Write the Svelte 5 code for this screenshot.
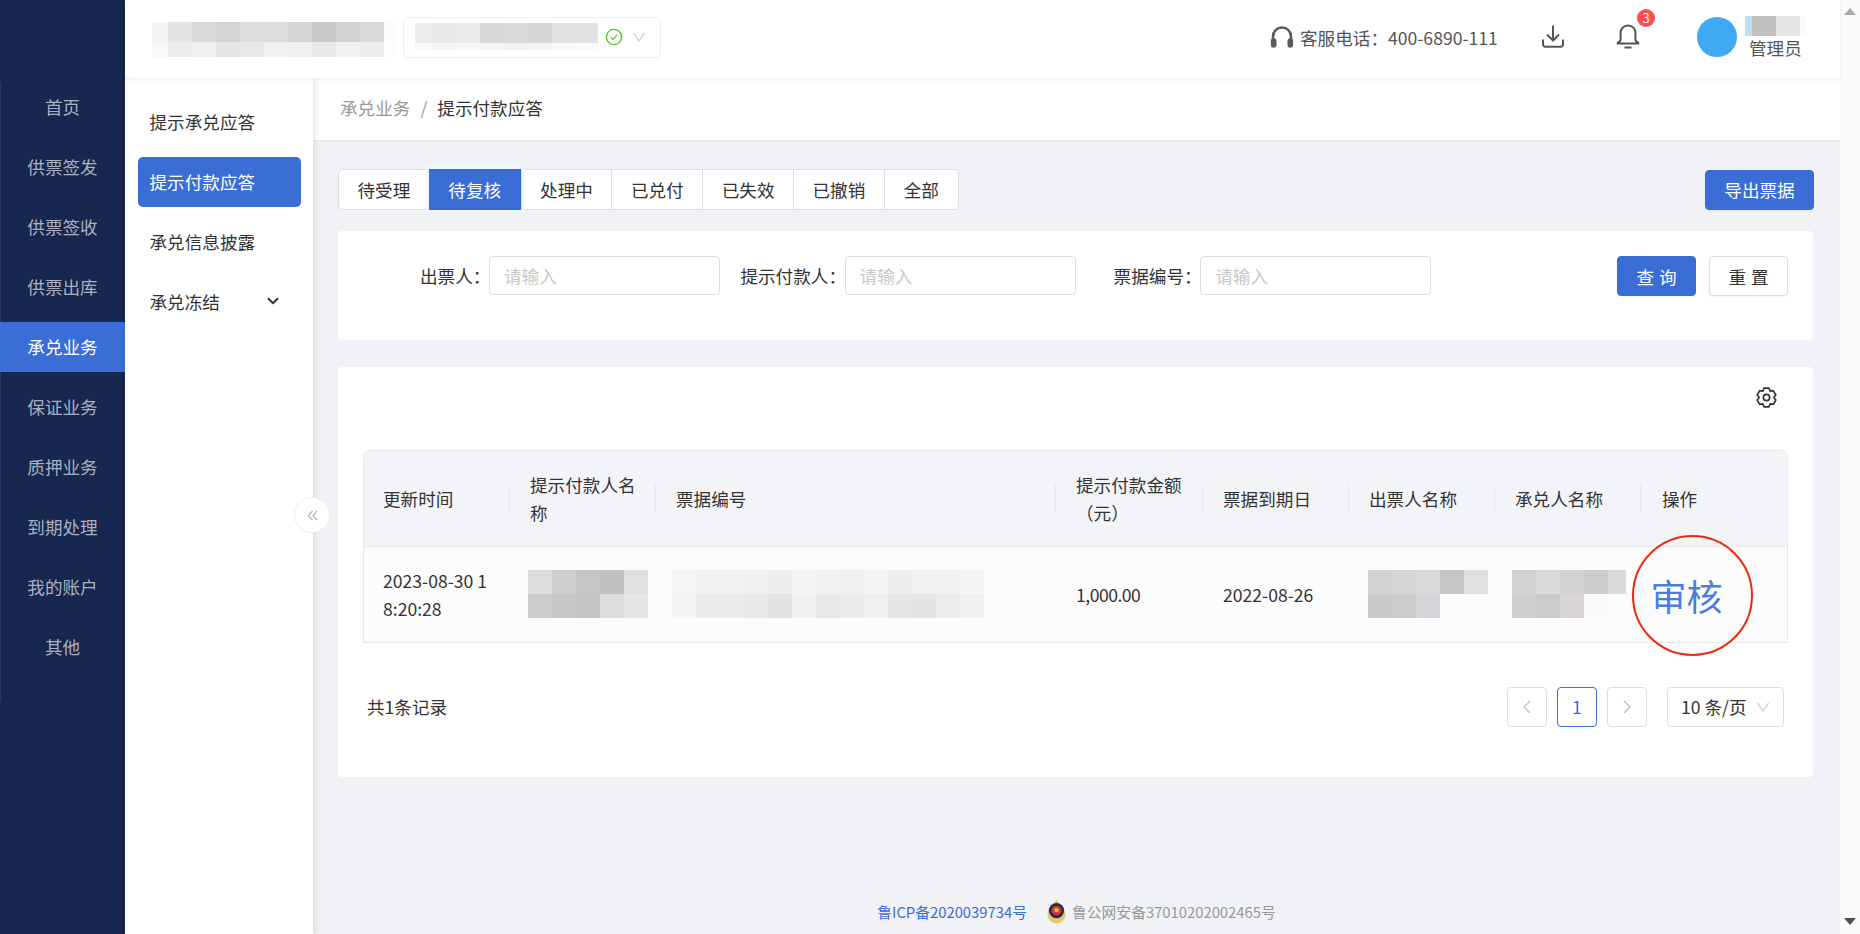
<script>
  const navItems = ['首页', '供票签发', '供票签收', '供票出库', '承兑业务', '保证业务', '质押业务', '到期处理', '我的账户', '其他'];
  const subItems = ['提示承兑应答', '提示付款应答', '承兑信息披露'];
  const tabs = ['待受理', '待复核', '处理中', '已兑付', '已失效', '已撤销', '全部'];
  const filters = [
    { label: '出票人' },
    { label: '提示付款人' },
    { label: '票据编号' }
  ];
  const columns = [
    { title: '更新时间', width: 146 },
    { title: '提示付款人名称', width: 146 },
    { title: '票据编号', width: 400 },
    { title: '提示付款金额（元）', width: 147 },
    { title: '票据到期日', width: 146 },
    { title: '出票人名称', width: 146 },
    { title: '承兑人名称', width: 146 },
    { title: '操作', width: 148 }
  ];

  // masked names, kept as colour tiles per row
  const brandMask = {
    cols: [16, 24, 24, 24, 24, 24, 24, 24, 24, 24, 13],
    heights: [20, 15],
    rows: [
      ['#f5f5f5', '#e4e4e4', '#d9d9d9', '#d5d5d5', '#dcdcdc', '#dcdcdc', '#d6d6d6', '#c9c9c9', '#d2d2d2', '#d9d9d9', '#fbfbfb'],
      ['#f8f8f8', '#ececec', '#efefef', '#e5e5e5', '#e9e9e9', '#f1f1f1', '#efefef', '#e9e9e9', '#f1f1f1', '#ececec', '#fdfdfd']
    ]
  };
  const orgMask = {
    cols: [17, 24, 24, 24, 24, 24, 24, 22],
    heights: [20, 7],
    rows: [
      ['#ececec', '#e8e8e8', '#ebebeb', '#d8d8d8', '#dadada', '#d6d6d6', '#e2e2e2', '#e2e2e2'],
      ['#f8f8f8', '#f3f3f3', '#f7f7f7', '#f4f4f4', '#f1f1f1', '#f4f4f4', '#f7f7f7', '#fafafa']
    ]
  };
  const userMask = {
    cols: [7, 24, 24, 6],
    heights: [20],
    rows: [['#bfdff3', '#c1c1c1', '#e5e6e6', '#fbfbfb']]
  };
  const payerMask = {
    pad: 18,
    cols: [24, 24, 24, 24, 24],
    heights: [24, 24],
    rows: [
      ['#dcdcdc', '#cfcfcf', '#c6c6c6', '#c1c1c1', '#e0e0e2'],
      ['#cecdcb', '#c6c8c8', '#c4c4c6', '#dcdcda', '#e6e7e9']
    ]
  };
  const billMask = {
    pad: 16,
    cols: [24, 24, 24, 24, 24, 24, 24, 24, 24, 24, 24, 24, 24],
    heights: [24, 24],
    rows: [
      ['#f6f6f4', '#f1f1f1', '#f1f1f1', '#f0f0f0', '#eeeeee', '#f4f4f4', '#f1f1f1', '#efefef', '#f4f4f4', '#eeeeee', '#f1f1f1', '#f1f1f1', '#f4f6f4'],
      ['#f5f5f5', '#ebebeb', '#ebebeb', '#e9e9e9', '#e2e2e2', '#f0f0f0', '#e8e8e8', '#eaeceb', '#efefef', '#e7e7e7', '#e4e4e4', '#ececea', '#f0f0f2']
    ]
  };
  const drawerMask = {
    pad: 19,
    cols: [24, 24, 24, 24, 24],
    heights: [24, 24],
    rows: [
      ['#d2d4d2', '#d5d5d5', '#d9d9d9', '#c8c6c4', '#dfe0e2'],
      ['#cbc9c9', '#cccccc', '#d3d5d8', '#fcfcfc', '#fcfcfc']
    ]
  };
  const acceptorMask = {
    pad: 17,
    cols: [24, 24, 24, 24, 18],
    heights: [24, 24],
    rows: [
      ['#d2d2d2', '#d9d9d9', '#d3d3d3', '#cccccc', '#d9d9db'],
      ['#cfcfcf', '#cbcbcb', '#d8d5d4', '#f9fafc', '#fcfcfc']
    ]
  };

  const trackStyle = (m) =>
    `grid-template-columns:${m.cols.map((c) => c + 'px').join(' ')};grid-template-rows:${m.heights.map((h) => h + 'px').join(' ')}`;

  // six toothed cog outline
  function cogPath(outer, inner) {
    const pts = [];
    for (let i = 0; i < 6; i++) {
      const a = i * 60 - 90;
      for (const [off, r] of [[-27, inner], [-15, outer], [15, outer], [27, inner]]) {
        const rad = ((a + off) * Math.PI) / 180;
        pts.push(`${(12 + r * Math.cos(rad)).toFixed(2)} ${(12 + r * Math.sin(rad)).toFixed(2)}`);
      }
    }
    return 'M' + pts.join('L') + 'Z';
  }
</script>

{#snippet mosaic(m)}
  <div class="mosaic" style={trackStyle(m)}>
    {#each m.rows as row}
      {#each row as color}
        <i style="background:{color}"></i>
      {/each}
    {/each}
  </div>
{/snippet}

{#snippet maskedCell(m, width)}
  <div class="cell masked" style="width:{width}px;padding-left:{m.pad}px">{@render mosaic(m)}</div>
{/snippet}

<div class="page">
  <aside class="nav">
    <div class="nav-list">
      {#each navItems as item}
        <div class="nav-item" class:active={item === '承兑业务'}>{item}</div>
      {/each}
    </div>
  </aside>

  <div class="body">
    <header class="topbar">
      <div class="brand">{@render mosaic(brandMask)}</div>
      <div class="org-select">
        {@render mosaic(orgMask)}
        <svg class="ok-icon" viewBox="0 0 18 18" width="18" height="18" fill="none" stroke="#52c41a">
          <circle cx="9" cy="9" r="7.6" stroke-width="1.4" />
          <path d="M5.8 9.2l2.3 2.5 4-4.8" stroke-width="1.2" />
        </svg>
        <svg class="caret" viewBox="0 0 14 14" width="14" height="14" fill="none" stroke="#c9c9c9" stroke-width="1.2">
          <path d="M1.500 3l5.500 8 5.500-8" />
        </svg>
      </div>

      <div class="top-right">
        <div class="service">
          <svg viewBox="0 0 24 22" width="24" height="22" fill="none" stroke="#5a5a5a" stroke-width="2.600">
            <path d="M3 15V10.500a9 9 0 0 1 18 0V15" />
            <rect x="2.200" y="13.500" width="3" height="7" rx="1.500" fill="#5a5a5a" />
            <rect x="18.800" y="13.500" width="3" height="7" rx="1.500" fill="#5a5a5a" />
          </svg>
          <span>客服电话：400-6890-111</span>
        </div>
        <svg class="download" viewBox="0 0 24 24" width="24" height="24" fill="none" stroke="#555" stroke-width="2">
          <path d="M12 1.500v14.500M6 10.500l6 6 6-6" />
          <path d="M2 15.500v5a2.200 2.200 0 0 0 2.200 2.200h15.600a2.200 2.200 0 0 0 2.200-2.200v-5" />
        </svg>
        <div class="bell">
          <svg viewBox="0 0 24 25" width="24" height="25" fill="none" stroke="#555" stroke-width="2">
            <path d="M12 1.500c-4.700 0-7.400 3.400-7.400 7.600v6.200c0 1.500-1 2.800-2.800 3.500v.7h20.400v-.7c-1.800-.7-2.800-2-2.800-3.500V9.100c0-4.200-2.700-7.600-7.400-7.600z" />
            <path d="M8.500 23.500h7" />
          </svg>
          <span class="badge">3</span>
        </div>
        <div class="user">
          <span class="avatar"></span>
          <div class="user-text">
            {@render mosaic(userMask)}
            <span>管理员</span>
          </div>
        </div>
      </div>
    </header>

    <div class="below">
      <aside class="subnav">
        {#each subItems as item}
          <div class="sub-item" class:active={item === '提示付款应答'}>{item}</div>
        {/each}
        <div class="sub-item">
          承兑冻结
          <svg viewBox="0 0 12 8" width="12" height="8" fill="none" stroke="#333" stroke-width="2">
            <path d="M1 1.200l5 5 5-5" />
          </svg>
        </div>
        <button class="collapse" aria-label="收起">
          <svg viewBox="0 0 12 12" width="11" height="11" fill="none" stroke="#aaa" stroke-width="1.200">
            <path d="M6 1L1.500 6 6 11M11 1L6.500 6l4.500 5" />
          </svg>
        </button>
      </aside>

      <main class="content">
        <div class="crumbs">
          <span class="crumb-parent">承兑业务</span>
          <span class="crumb-sep">/</span>
          <span class="crumb-current">提示付款应答</span>
        </div>

        <div class="work">
          <div class="toolbar">
            <div class="tabs">
              {#each tabs as tab}
                <div class="tab" class:active={tab === '待复核'}>{tab}</div>
              {/each}
            </div>
            <button class="btn primary export">导出票据</button>
          </div>

          <section class="card filters">
            <div class="filter-fields">
              {#each filters as f}
                <div class="field">
                  <span class="field-label">{f.label}：</span>
                  <div class="input">请输入</div>
                </div>
              {/each}
            </div>
            <div class="filter-actions">
              <button class="btn primary wide">查询</button>
              <button class="btn wide">重置</button>
            </div>
          </section>

          <section class="card results">
            <div class="settings">
              <svg viewBox="0 0 24 24" width="21" height="21" fill="none" stroke="#333" stroke-width="1.900" stroke-linejoin="round">
                <path d={cogPath(11, 8.6)} />
                <circle cx="12" cy="12" r="3.600" />
              </svg>
            </div>

            <div class="table">
              <div class="row head">
                {#each columns as col}
                  <div class="cell" style="width:{col.width}px">
                    <span>{col.title}</span>
                  </div>
                {/each}
              </div>
              <div class="row data">
                <div class="cell" style="width:{columns[0].width}px"><span class="date">2023-08-30 18:20:28</span></div>
                {@render maskedCell(payerMask, columns[1].width)}
                {@render maskedCell(billMask, columns[2].width)}
                <div class="cell amount" style="width:{columns[3].width}px">1,000.00</div>
                <div class="cell" style="width:{columns[4].width}px">2022-08-26</div>
                {@render maskedCell(drawerMask, columns[5].width)}
                {@render maskedCell(acceptorMask, columns[6].width)}
                <div class="cell" style="width:{columns[7].width}px"></div>
              </div>
              <div class="review-mark"><a href="#review">审核</a></div>
            </div>

            <div class="pager-row">
              <span>共1条记录</span>
              <div class="pager">
                <button class="page-btn" aria-label="上一页">
                  <svg viewBox="0 0 10 16" width="10" height="16" fill="none" stroke="#bbb" stroke-width="1.200"><path d="M8 2L2 8l6 6" /></svg>
                </button>
                <button class="page-btn current">1</button>
                <button class="page-btn" aria-label="下一页">
                  <svg viewBox="0 0 10 16" width="10" height="16" fill="none" stroke="#bbb" stroke-width="1.200"><path d="M2 2l6 6-6 6" /></svg>
                </button>
                <div class="page-size">
                  10 条/页
                  <svg viewBox="0 0 14 14" width="14" height="14" fill="none" stroke="#c4c4c4" stroke-width="1.200"><path d="M1.500 3l5.500 8 5.500-8" /></svg>
                </div>
              </div>
            </div>
          </section>

          <footer class="footer">
            <span class="icp">鲁ICP备2020039734号</span>
            <svg class="emblem" viewBox="0 0 20 25" width="19" height="24">
              <circle cx="10" cy="15" r="9.500" fill="#e6c765" />
              <path d="M7.500 3l2.500-2.500L12.500 3z" fill="#e0b93f" />
              <circle cx="10" cy="11" r="8" fill="#1d2a66" />
              <circle cx="10" cy="11" r="5.200" fill="#cf3a2c" />
              <circle cx="10" cy="10.500" r="2.300" fill="#e8b93a" />
            </svg>
            <span class="psb">鲁公网安备37010202002465号</span>
          </footer>
        </div>
      </main>
    </div>
  </div>

  <div class="scrollbar">
    <i class="arrow up"></i>
    <i class="arrow down"></i>
  </div>
</div>

<style>
  :global(body) {
    margin: 0;
    background: #f0f2f6;
  }

  .page {
    display: flex;
    height: 934px;
    overflow: hidden;
    font-family: "Noto Sans CJK SC", "Liberation Sans", sans-serif;
    font-size: 17.6px;
    color: #333;
  }

  .mosaic {
    display: grid;
  }

  .mosaic i {
    display: block;
  }

  /* left rail */
  .nav {
    flex: none;
    width: 125px;
    padding-top: 82px;
    box-sizing: border-box;
    background: #18274f;
  }

  .nav-list {
    border-left: 1px solid #2c3a60;
    height: 620px;
  }

  .nav-item {
    height: 50px;
    box-sizing: border-box;
    padding-bottom: 2px;
    margin: 0 0 10px -1px;
    display: flex;
    align-items: center;
    justify-content: center;
    color: #a9b0bf;
  }

  .nav-item.active {
    background: #3b6dd6;
    color: #fff;
  }

  .body {
    flex: 1;
    min-width: 0;
    display: flex;
    flex-direction: column;
  }

  /* top bar */
  .topbar {
    flex: none;
    height: 78px;
    box-sizing: border-box;
    display: flex;
    align-items: center;
    padding-left: 27px;
    background: #fff;
    box-shadow: 0 1px 4px rgba(0, 0, 0, 0.08);
    position: relative;
    z-index: 2;
  }

  .brand {
    margin-top: 1px;
  }

  .org-select {
    margin: -4px 0 0 6px;
    width: 258px;
    height: 41px;
    box-sizing: border-box;
    display: flex;
    align-items: flex-start;
    padding: 5px 0 0 11px;
    border: 1px solid #eee;
    border-radius: 5px;
  }

  .ok-icon {
    margin: 5px 0 0 7px;
  }

  .caret {
    margin: 7px 0 0 9px;
  }

  .top-right {
    margin: -4px 0 0 auto;
    display: flex;
    align-items: center;
    color: #555;
  }

  .service {
    display: flex;
    align-items: center;
    gap: 6px;
    width: 271px;
  }

  .download {
    margin-top: -2px;
  }

  .bell {
    position: relative;
    margin: -2px 0 0 51px;
    height: 25px;
  }

  .badge {
    position: absolute;
    left: 21px;
    top: -15px;
    width: 18px;
    height: 18px;
    border-radius: 50%;
    background: #ff4d4f;
    color: #fff;
    font-size: 13px;
    line-height: 18px;
    text-align: center;
  }

  .user {
    display: flex;
    align-items: center;
    margin: 0 34px 0 57px;
  }

  .avatar {
    width: 40px;
    height: 40px;
    border-radius: 50%;
    background: #3fa9f5;
  }

  .user-text {
    margin-left: 8px;
    display: flex;
    flex-direction: column;
    height: 42px;
  }

  .user-text span {
    margin-left: 4px;
    line-height: 24px;
  }

  .below {
    flex: 1;
    min-height: 0;
    display: flex;
  }

  /* second level menu */
  .subnav {
    flex: none;
    position: relative;
    width: 188px;
    box-sizing: border-box;
    padding: 19px 12px 0 13px;
    background: #fff;
    box-shadow: 2px 0 6px rgba(0, 0, 0, 0.1);
    z-index: 1;
  }

  .sub-item {
    height: 50px;
    box-sizing: border-box;
    margin-bottom: 10px;
    padding: 0 22px 2px 11.5px;
    border-radius: 5px;
    display: flex;
    align-items: center;
    justify-content: space-between;
  }

  .sub-item.active {
    background: #3b6dd6;
    color: #fff;
  }

  .collapse {
    position: absolute;
    right: -17px;
    top: 419px;
    width: 36px;
    height: 36px;
    padding: 0;
    display: flex;
    align-items: center;
    justify-content: center;
    background: #fff;
    border: 1px solid #eee;
    border-radius: 50%;
  }

  /* main */
  .content {
    flex: 1;
    min-width: 0;
    display: flex;
    flex-direction: column;
  }

  .crumbs {
    flex: none;
    height: 62px;
    box-sizing: border-box;
    display: flex;
    align-items: center;
    padding: 0 0 4px 27px;
    background: #fff;
    box-shadow: 0 1px 3px rgba(0, 0, 0, 0.05);
  }

  .crumb-parent,
  .crumb-sep {
    color: #999;
  }

  .crumb-sep {
    margin: 0 10px;
  }

  .work {
    flex: 1;
    padding: 29px 27px 0 25px;
    position: relative;
  }

  .toolbar {
    display: flex;
    justify-content: space-between;
    align-items: center;
    margin-right: -1px;
  }

  .tabs {
    display: flex;
    height: 41px;
    box-sizing: border-box;
    background: #fff;
    border: 1px solid #ddd;
    border-radius: 5px;
  }

  .tab {
    padding: 0 18px;
    display: flex;
    align-items: center;
    justify-content: center;
    border-left: 1px solid #ddd;
    min-width: 53.8px;
  }

  .tab:last-child {
    min-width: 37px;
  }

  .tab:first-child {
    border-left: 0;
  }

  .tab.active {
    background: #3b6dd6;
    color: #fff;
    margin: -1px 0;
    border-left: 0;
    padding: 0 19px;
    box-shadow: 0 0 0 3px #f1f7ff;
  }

  .btn {
    font: inherit;
    height: 40px;
    padding: 0;
    border: 1px solid #ddd;
    border-radius: 4px;
    background: #fff;
    color: #333;
    box-shadow: 0 1px 2px rgba(0, 0, 0, 0.06);
  }

  .btn.primary {
    background: #3b6dd6;
    border-color: #3b6dd6;
    color: #fff;
  }

  .btn.export {
    width: 109px;
  }

  .btn.wide {
    width: 79px;
    letter-spacing: 5px;
    padding-left: 5px;
  }

  .card {
    background: #fff;
    border-radius: 4px;
  }

  .filters {
    margin-top: 21px;
    height: 109px;
    box-sizing: border-box;
    padding: 25px 25px 0 26px;
    display: flex;
    align-items: flex-start;
    justify-content: space-between;
  }

  .filter-fields {
    display: flex;
  }

  .field {
    flex: none;
    width: 355.6px;
    display: flex;
    align-items: center;
  }

  .field-label {
    flex: none;
    width: 126.4px;
    margin-right: -1.4px;
    text-align: right;
    white-space: nowrap;
  }

  .input {
    flex: none;
    width: 231px;
    height: 39px;
    box-sizing: border-box;
    padding-left: 14px;
    line-height: 37px;
    border: 1px solid #ddd;
    border-radius: 4px;
    color: #c8c8c8;
  }

  .filter-actions {
    flex: none;
    display: flex;
    gap: 13px;
  }

  .results {
    margin-top: 27px;
    height: 410px;
    box-sizing: border-box;
    padding: 20px 25px 0;
  }

  .settings {
    height: 63px;
    display: flex;
    justify-content: flex-end;
    padding-right: 11px;
    align-items: flex-start;
  }

  .table {
    position: relative;
    border: 1px solid #e8e8ec;
    border-radius: 6px 6px 0 0;
    background: #fcfcfc;
  }

  .row {
    display: flex;
    height: 95px;
    box-sizing: border-box;
    align-items: center;
  }

  .row.head {
    height: 96px;
    background: #f3f4f8;
    border-bottom: 1px solid #e8e8ec;
    border-radius: 6px 6px 0 0;
  }

  .cell {
    flex: none;
    position: relative;
    box-sizing: border-box;
    padding: 0 20px;
    line-height: 28px;
  }

  .cell:first-child {
    padding-left: 19px;
  }

  .cell:last-child {
    padding-left: 21px;
  }

  .head .cell:not(:last-child)::after {
    content: "";
    position: absolute;
    right: 0;
    top: 50%;
    height: 28px;
    margin-top: -14px;
    width: 1px;
    background: #e6e6ea;
  }

  .date {
    display: block;
    word-break: break-all;
  }

  .amount {
    letter-spacing: -0.5px;
  }

  .cell.masked {
    padding-right: 0;
    margin-top: -1px;
  }

  .review-mark {
    position: absolute;
    left: 1267.5px;
    top: 83.5px;
    width: 121px;
    height: 121px;
    box-sizing: border-box;
    padding-right: 11px;
    border: 2.5px solid #f0290f;
    border-radius: 50%;
    display: flex;
    align-items: center;
    justify-content: center;
  }

  .review-mark a {
    color: #4a7de0;
    font-size: 36px;
    text-decoration: none;
  }

  .pager-row {
    margin-top: 43px;
    padding-left: 4px;
    height: 41px;
    display: flex;
    align-items: center;
    justify-content: space-between;
  }

  .pager {
    display: flex;
    align-items: center;
    gap: 10px;
    padding-right: 4px;
  }

  .page-btn {
    font: inherit;
    width: 40px;
    height: 40px;
    padding: 0;
    display: flex;
    align-items: center;
    justify-content: center;
    background: #fff;
    border: 1px solid #ddd;
    border-radius: 4px;
    color: #333;
  }

  .page-btn.current {
    border-color: #3b6dd6;
    color: #3b6dd6;
  }

  .page-size {
    margin-left: 10px;
    width: 117px;
    height: 40px;
    box-sizing: border-box;
    padding: 0 13px 0 13px;
    display: flex;
    align-items: center;
    justify-content: space-between;
    border: 1px solid #ddd;
    border-radius: 4px;
    white-space: pre;
  }

  /* record numbers */
  .footer {
    position: absolute;
    left: 0;
    right: 0;
    bottom: 10px;
    display: flex;
    align-items: center;
    justify-content: center;
    font-size: 14.8px;
    height: 25px;
  }

  .icp {
    color: #3b6dd6;
  }

  .emblem {
    margin: 0 6px 0 20px;
  }

  .psb {
    color: #999;
  }

  .scrollbar {
    flex: none;
    width: 20px;
    position: relative;
    background: #fafafa;
  }

  .arrow {
    position: absolute;
    left: 4px;
    width: 0;
    height: 0;
    border-left: 6px solid transparent;
    border-right: 6px solid transparent;
  }

  .arrow.up {
    top: 8px;
    border-bottom: 7px solid #a8a8a8;
  }

  .arrow.down {
    bottom: 9px;
    border-top: 7px solid #505050;
  }
</style>
